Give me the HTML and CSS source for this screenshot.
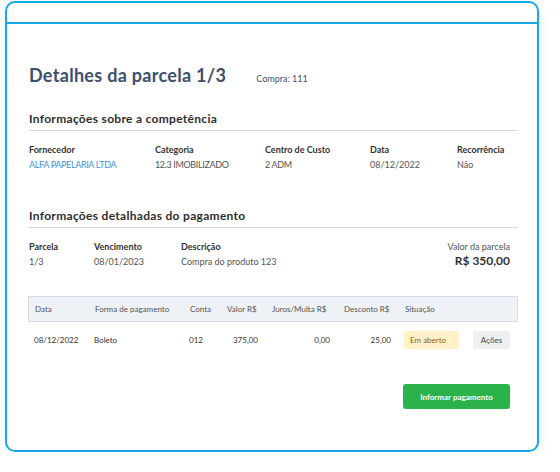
FILE: index.html
```html
<!DOCTYPE html>
<html lang="pt-BR">
<head>
<meta charset="utf-8">
<title>Detalhes da parcela</title>
<link rel="stylesheet" href="styles.css">
</head>
<body>
<div class="card">
  <div class="card-top"></div>
  <div class="card-body">
    <div class="title-row">
      <h1 class="title">Detalhes da parcela 1/3</h1>
      <span class="purchase">Compra: 111</span>
    </div>

    <h2 class="section-title">Informações sobre a competência</h2>
    <div class="info-grid info-competencia">
      <div class="field"><div class="label">Fornecedor</div><div class="value link caps">ALFA PAPELARIA LTDA</div></div>
      <div class="field"><div class="label">Categoria</div><div class="value caps">12.3 IMOBILIZADO</div></div>
      <div class="field"><div class="label">Centro de Custo</div><div class="value caps">2 ADM</div></div>
      <div class="field"><div class="label">Data</div><div class="value">08/12/2022</div></div>
      <div class="field"><div class="label">Recorrência</div><div class="value">Não</div></div>
    </div>

    <h2 class="section-title second">Informações detalhadas do pagamento</h2>
    <div class="info-grid info-pagamento">
      <div class="field"><div class="label">Parcela</div><div class="value">1/3</div></div>
      <div class="field"><div class="label">Vencimento</div><div class="value">08/01/2023</div></div>
      <div class="field"><div class="label">Descrição</div><div class="value">Compra do produto 123</div></div>
      <div class="field total"><div class="total-label">Valor da parcela</div><div class="total-value">R$ 350,00</div></div>
    </div>

    <div class="table">
      <div class="tr th">
        <div class="cell">Data</div>
        <div class="cell">Forma de pagamento</div>
        <div class="cell">Conta</div>
        <div class="cell">Valor R$</div>
        <div class="cell">Juros/Multa R$</div>
        <div class="cell">Desconto R$</div>
        <div class="cell">Situação</div>
        <div class="cell"></div>
      </div>
      <div class="tr td">
        <div class="cell">08/12/2022</div>
        <div class="cell">Boleto</div>
        <div class="cell">012</div>
        <div class="cell num">375,00</div>
        <div class="cell num">0,00</div>
        <div class="cell num">25,00</div>
        <div class="cell"><span class="badge">Em aberto</span></div>
        <div class="cell"><span class="actions">Ações</span></div>
      </div>
    </div>

    <div class="footer">
      <button class="btn-primary" type="button">Informar pagamento</button>
    </div>
  </div>
</div>
</body>
</html>
```

FILE: styles.css
```css
* { box-sizing: border-box; }

html, body {
  margin: 0;
  padding: 0;
  background: #ffffff;
}

body {
  font-family: "Lato", "Open Sans", sans-serif;
  color: #333333;
}

.card {
  margin: 1px 0 0 5px;
  width: 534px;
  height: 451px;
  border: 2px solid #17a9e3;
  border-radius: 10px;
  background: #ffffff;
  box-shadow: 0 4px 14px rgba(23, 169, 227, 0.12);
  overflow: hidden;
}

.card-top {
  height: 21px;
  border-bottom: 2px solid #17a9e3;
}

.card-body {
  padding: 40px 19px 0 22px;
}

.title-row {
  display: flex;
  align-items: baseline;
  gap: 30px;
}

.title {
  margin: 0;
  font-size: 18px;
  line-height: 22px;
  font-weight: 700;
  letter-spacing: 0.3px;
  color: #3c4f6d;
}

.purchase {
  font-size: 9px;
  color: #3c4f6d;
}

.section-title {
  margin: 25px 0 0;
  padding-bottom: 3px;
  border-bottom: 1px solid #dadada;
  font-size: 12px;
  line-height: 16px;
  font-weight: 700;
  letter-spacing: 0.3px;
  color: #2e2e2e;
}

.section-title.second {
  margin-top: 36px;
}

.info-grid {
  display: grid;
  margin-top: 12px;
}

.info-competencia {
  grid-template-columns: 126px 110px 105px 87px 1fr;
}

.info-pagamento {
  grid-template-columns: 65px 87px 1fr auto;
  padding-right: 8px;
}

.label {
  font-size: 9px;
  line-height: 14px;
  font-weight: 700;
  color: #333333;
}

.value {
  margin-top: 1px;
  font-size: 9px;
  line-height: 14px;
  color: #555555;
}

.value.caps {
  letter-spacing: -0.35px;
}

.value.link {
  color: #3f8fd8;
}

.total {
  text-align: right;
}

.total-label {
  font-size: 9px;
  line-height: 14px;
  color: #555555;
}

.total-value {
  font-size: 12px;
  line-height: 14px;
  font-weight: 700;
  color: #333333;
}

.table {
  margin: 27px 0 0 -1px;
}

.tr {
  display: grid;
  grid-template-columns: 60px 95px 37px 45px 72px 61px 69px 1fr;
  align-items: center;
}

.th {
  height: 26px;
  background: #eef1f5;
  border: 1px solid #d8dde4;
  font-size: 8px;
  color: #555555;
}

.td {
  height: 36px;
  font-size: 8px;
  color: #333333;
}

.cell {
  padding: 0 7px 0 6px;
  white-space: nowrap;
}

.cell.num {
  text-align: right;
}

.badge {
  display: inline-block;
  width: 55px;
  height: 18px;
  line-height: 18px;
  padding-left: 6px;
  background: #fff2c8;
  color: #8a6416;
  border-radius: 2px;
}

.actions {
  display: inline-block;
  width: 37px;
  height: 18px;
  line-height: 18px;
  text-align: center;
  background: #eef0f4;
  color: #444444;
  border-radius: 2px;
}

.footer {
  display: flex;
  justify-content: flex-end;
  padding-right: 8px;
  margin-top: 26px;
}

.btn-primary {
  width: 107px;
  height: 25px;
  border: 0;
  border-radius: 3px;
  background: #2bb24a;
  color: #ffffff;
  font-family: inherit;
  font-size: 8px;
  font-weight: 700;
  padding: 0;
}
```
